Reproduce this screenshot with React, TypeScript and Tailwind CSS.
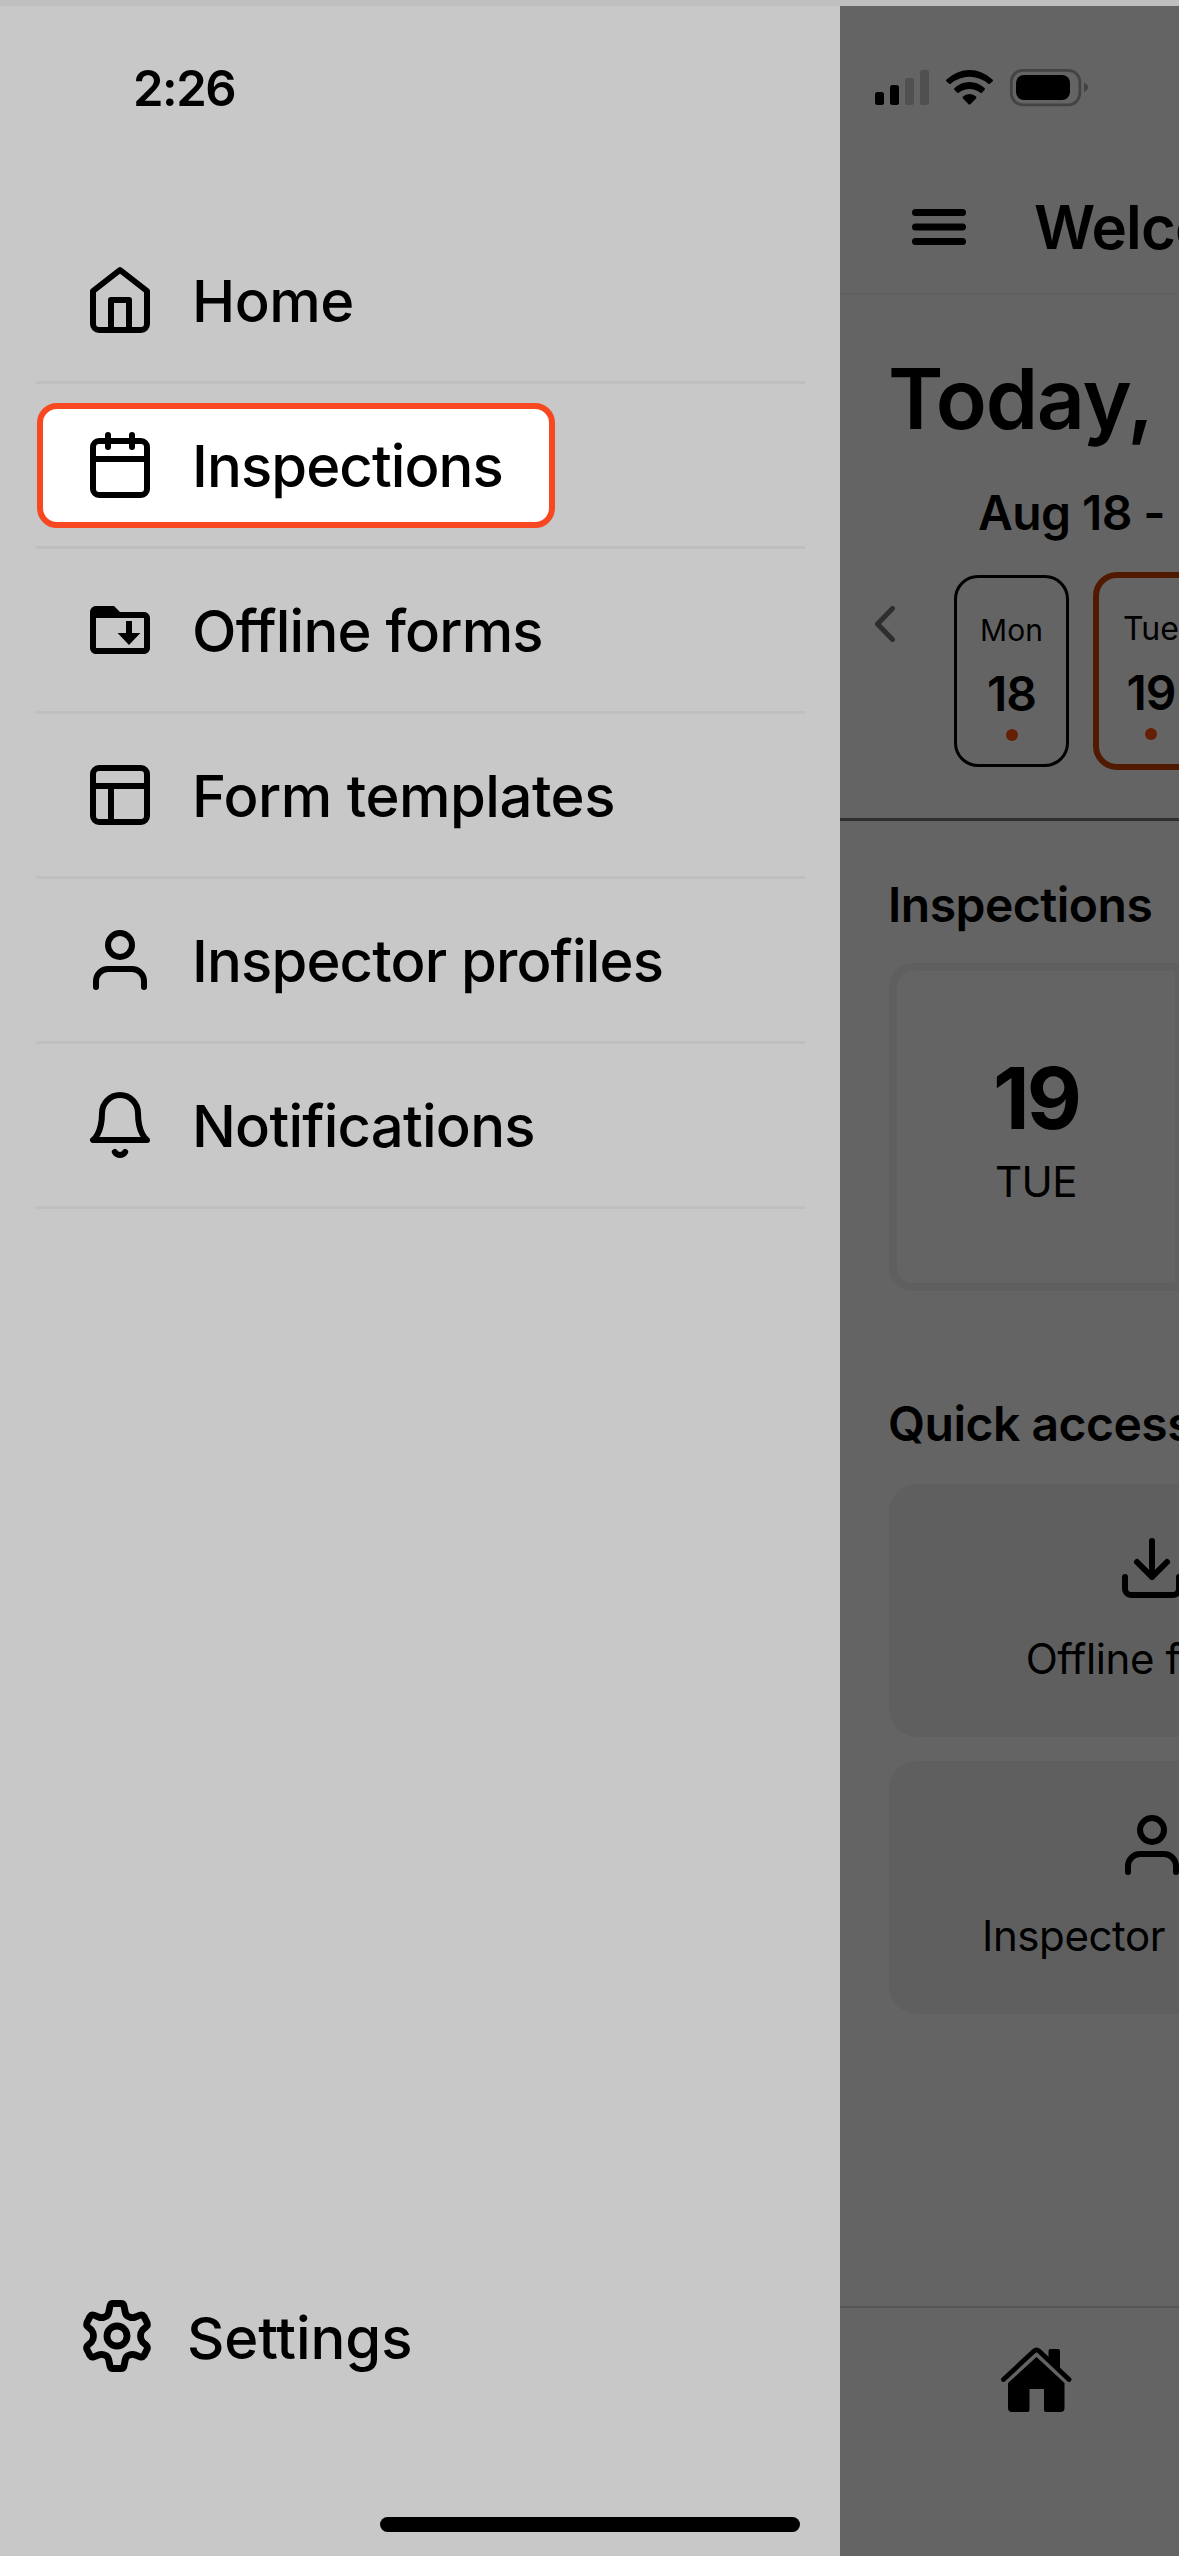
import type { ReactNode } from "react";

type IconProps = { className?: string; children: ReactNode };

function Icon({ className = "size-[72px]", children }: IconProps) {
  return (
    <svg
      viewBox="0 0 24 24"
      fill="none"
      stroke="currentColor"
      strokeWidth={2}
      strokeLinecap="round"
      strokeLinejoin="round"
      className={`shrink-0 ${className}`}
    >
      {children}
    </svg>
  );
}

const HomeIcon = () => (
  <Icon>
    <path d="m3 9 9-7 9 7v11a2 2 0 0 1-2 2H5a2 2 0 0 1-2-2z" />
    <path d="M9 22V12h6v10" />
  </Icon>
);

const CalendarIcon = () => (
  <Icon>
    <rect x="3" y="4" width="18" height="18" rx="2" />
    <path d="M8 2v4M16 2v4M3 10h18" />
  </Icon>
);

const FolderIcon = () => (
  <Icon>
    <g fill="currentColor" stroke="none">
      <path d="M20 6h-8l-2-2H4c-1.1 0-1.99.9-1.99 2L2 18c0 1.1.9 2 2 2h16c1.1 0 2-.9 2-2V8c0-1.1-.9-2-2-2zm0 12H4V8h16v10z" />
      <path d="M16 9h-2v4h-2.8l3.8 4 3.8-4H16z" />
    </g>
  </Icon>
);

const TemplateIcon = () => (
  <Icon>
    <rect x="3" y="3" width="18" height="18" rx="2" />
    <path d="M3 9h18M9 21V9" />
  </Icon>
);

const UserIcon = () => (
  <Icon>
    <path d="M20 21v-2a4 4 0 0 0-4-4H8a4 4 0 0 0-4 4v2" />
    <circle cx="12" cy="7" r="4" />
  </Icon>
);

const BellIcon = () => (
  <Icon>
    <path d="M18 8A6 6 0 0 0 6 8c0 7-3 9-3 9h18s-3-2-3-9" />
    <path d="M13.73 21a2 2 0 0 1-3.46 0" />
  </Icon>
);

const DownloadIcon = () => (
  <Icon>
    <path d="M21 15v4a2 2 0 0 1-2 2H5a2 2 0 0 1-2-2v-4" />
    <path d="m7 10 5 5 5-5M12 15V3" />
  </Icon>
);

const GearIcon = () => (
  <svg
    viewBox="-36 -36 72 72"
    fill="none"
    stroke="currentColor"
    strokeWidth={6.8}
    strokeLinejoin="round"
    className="size-[72px] shrink-0"
  >
    <circle r="10" />
    <path d="M-4-32.5H4Q6.500-32.500 7-30L8.300-23.500Q9-20 12.500-19Q15.500-17.800 18.500-19L23-20.800Q25.500-21.800 27-19.500L30-13.500Q31-11 29.300-9.300L25.500-6Q23.500-3.500 23.500 0Q23.500 3.500 25.500 6L29.300 9.300Q31 11 30 13.500L27 19.500Q25.500 21.800 23 20.800L18.500 19Q15.500 17.800 12.500 19Q9 20 8.300 23.500L7 30Q6.500 32.500 4 32.500H-4Q-6.500 32.500-7 30L-8.300 23.500Q-9 20-12.500 19Q-15.500 17.800-18.500 19L-23 20.800Q-25.500 21.800-27 19.500L-30 13.500Q-31 11-29.300 9.300L-25.500 6Q-23.500 3.500-23.500 0Q-23.500-3.500-25.500-6L-29.300-9.300Q-31-11-30-13.500L-27-19.500Q-25.500-21.800-23-20.800L-18.500-19Q-15.500-17.800-12.500-19Q-9-20-8.300-23.500L-7-30Q-6.500-32.500-4-32.500Z" />
  </svg>
);

const menu = [
  { label: "Home", icon: <HomeIcon />, tracking: "tracking-[-0.5px]" },
  { label: "Inspections", icon: <CalendarIcon />, tracking: "tracking-[-0.9px]", active: true },
  { label: "Offline forms", icon: <FolderIcon />, tracking: "tracking-[-0.8px]" },
  { label: "Form templates", icon: <TemplateIcon />, tracking: "tracking-[-0.5px]" },
  { label: "Inspector profiles", icon: <UserIcon />, tracking: "tracking-[-0.85px]" },
  { label: "Notifications", icon: <BellIcon />, tracking: "tracking-[-0.75px]" },
];

function Drawer() {
  return (
    <aside className="flex w-[840px] shrink-0 flex-col bg-[#c8c8c8]">
      <div className="flex h-[213px] items-start pl-[133px] pt-[53px]">
        <span className="text-[49px] font-semibold leading-[60px] tracking-[-1.5px]">2:26</span>
      </div>

      {/* Menu */}
      <nav className="flex w-[805px] flex-col pl-9">
        {menu.map((item) => (
          <div key={item.label} className="flex h-[165px] items-center border-b-[3px] border-[#bfbfbf]">
            <div
              className={`flex h-[125px] items-center gap-9 ${
                item.active
                  ? "ml-px w-[518px] rounded-[20px] border-[6px] border-[#f84822] bg-white pl-[41px]"
                  : "pl-12"
              }`}
            >
              {item.icon}
              <span className={`whitespace-nowrap pt-px text-[58px] font-medium leading-[70px] ${item.tracking}`}>
                {item.label}
              </span>
            </div>
          </div>
        ))}
      </nav>

      {/* Settings */}
      <div className="mt-auto flex items-center gap-[34px] pl-[81px]">
        <GearIcon />
        <span className="pt-1 text-[58px] font-medium leading-[70px] tracking-[-0.1px]">Settings</span>
      </div>
      <div className="mb-6 ml-[380px] mt-[144px] h-[15px] w-[420px] rounded-full bg-black" />
    </aside>
  );
}

function StatusIcons() {
  return (
    <svg viewBox="0 0 220 40" className="ml-[33px] h-10 w-[220px] shrink-0">
      <rect x="2" y="24" width="9" height="13" rx="2.5" />
      <rect x="17" y="17" width="9" height="20" rx="2.5" />
      <rect x="32" y="10" width="9" height="27" rx="2.5" fill="#505050" />
      <rect x="47" y="2" width="9" height="35" rx="2.5" fill="#505050" />
      <path d="M73.500 11.500Q84 2 96.500 2T119.500 11.500Q120.500 12.500 119.500 13.500L117 15.500Q116 16.500 115 15.500Q106.500 8.800 96.500 8.800T78 15.500Q77 16.500 76 15.500L73.500 13.500Q72.500 12.500 73.500 11.500Z" />
      <path d="M81.500 20Q88 14 96.500 14T111.500 20Q112.500 21 111.500 22L109 24.500Q108 25.500 107 24.500Q102.500 21 96.500 21T86 24.500Q85 25.500 84 24.500L81.500 22Q80.500 21 81.500 20Z" />
      <path d="M90 28.500Q92.500 26 96.500 26T103 28.500Q104 29.500 103 30.500L97.500 36.200Q96.500 37 95.500 36.200L90 30.500Q89 29.500 90 28.500Z" />
      <rect x="138.3" y="2.3" width="68.5" height="34.5" rx="11.5" fill="none" stroke="#434343" strokeWidth="2.8" />
      <rect x="143" y="7" width="54" height="25" rx="8" />
      <path d="M211 14.500q4 2 4 4.800t-4 4.800z" fill="#434343" />
    </svg>
  );
}

type DayProps = { name: string; date: string; selected?: boolean };

function Day({ name, date, selected }: DayProps) {
  return (
    <div
      className={`flex shrink-0 flex-col items-center rounded-[24px] ${
        selected
          ? "h-[198px] w-[116px] border-[6px] border-[#511a00] pt-[31px]"
          : "h-[192px] w-[115px] border-[3px] border-black pt-[32px]"
      }`}
    >
      <span className={selected ? "text-[32px] leading-[40px]" : "text-[30px] leading-[40px]"}>{name}</span>
      <span className="mt-4 text-[48px] font-semibold leading-[56px] tracking-[-1px]">{date}</span>
      <span className="mt-[7px] size-3 rounded-full bg-[#641f05]" />
    </div>
  );
}

function QuickCard({ label, children }: { label: string; children: ReactNode }) {
  return (
    <div className="flex h-[253px] w-[526px] flex-col items-center rounded-[28px] bg-[#5f5f5f] pt-12">
      {children}
      <span className="mt-[29px] text-[42px] leading-[52px] tracking-[-0.4px]">{label}</span>
    </div>
  );
}

function HomeScreen() {
  return (
    <main className="flex w-[339px] shrink-0 flex-col overflow-hidden whitespace-nowrap bg-[#646464]">
      <div className="flex h-[289px] shrink-0 flex-col border-b-2 border-[#616161] pt-[62px]">
        <StatusIcons />
        {/* Header */}
        <div className="flex items-center gap-[68px] pl-[72px] pt-[83px]">
          <svg
            viewBox="0 0 54 36"
            className="h-9 w-[54px] shrink-0"
            stroke="currentColor"
            strokeWidth="7"
            strokeLinecap="round"
          >
            <path d="M3.500 3.500h47M3.500 18h47M3.500 32.500h47" />
          </svg>
          <h1 className="text-[60px] font-semibold leading-[72px] tracking-[-0.8px]">Welcome</h1>
        </div>
      </div>

      {/* Week */}
      <section className="flex h-[526px] shrink-0 flex-col border-b-[3px] border-[#2f2f2f]">
        <h2 className="pl-[48px] pt-[54px] text-[84px] font-semibold leading-[100px] tracking-[-1.2px]">Today,</h2>
        <p className="pl-[138px] pt-[34px] text-[48px] font-semibold leading-[60px] tracking-[-0.6px]">Aug 18 -</p>
        <div className="mt-[29px] flex items-start">
          <svg
            viewBox="0 0 20 36"
            className="ml-[35px] mr-[59px] mt-[34px] h-9 w-5 shrink-0"
            fill="none"
            stroke="#2d2d2d"
            strokeWidth="5"
            strokeLinecap="round"
            strokeLinejoin="round"
          >
            <path d="M17.500 2.500 2.500 18l15 15.500" />
          </svg>
          <div className="flex items-center gap-6">
            <Day name="Mon" date="18" />
            <Day name="Tue" date="19" selected />
          </div>
        </div>
      </section>

      {/* Inspections */}
      <section className="flex shrink-0 flex-col pl-[49px] pt-[54px]">
        <h3 className="-ml-px text-[48px] font-semibold leading-[60px] tracking-[-0.5px]">Inspections</h3>
        <div className="mt-[28px] flex h-[328px] w-[600px] rounded-[24px] border-8 border-[#5f5f5f]">
          <div className="flex w-[286px] flex-col items-center border-r-8 border-[#5f5f5f] pt-[78px]">
            <span className="text-[85px] font-bold leading-[100px] tracking-[-3px]">19</span>
            <span className="mt-[5px] text-[42px] leading-[56px] tracking-[-0.5px]">TUE</span>
          </div>
        </div>
      </section>

      {/* Quick access */}
      <section className="flex shrink-0 flex-col pl-[49px] pt-[103px]">
        <h3 className="-ml-px text-[48px] font-semibold leading-[60px] tracking-[-0.5px]">Quick access</h3>
        <div className="mt-[30px] flex flex-col gap-6">
          <QuickCard label="Offline forms">
            <DownloadIcon />
          </QuickCard>
          <QuickCard label="Inspector profiles">
            <UserIcon />
          </QuickCard>
        </div>
      </section>

      {/* Tab bar */}
      <footer className="mt-auto h-[250px] shrink-0 border-t-2 border-[#565656] pl-[160px] pt-[37px]">
        <svg viewBox="0 0 72 68" className="h-[68px] w-[72px]">
          <path
            d="M3.500 34.500 34 6q2.500-2.200 5 0L69 34.500"
            fill="none"
            stroke="currentColor"
            strokeWidth="4.8"
            strokeLinecap="round"
          />
          <path d="M48.500 6q0-2 2-2H58q2 0 2 2v20L48.500 15z" />
          <path d="M36.500 12 64.500 38v25q0 4-4 4H46q-2 0-2-2V44H29.500v21q0 2-2 2H12q-4 0-4-4V38z" />
        </svg>
      </footer>
    </main>
  );
}

export default function App() {
  return (
    <div className="flex h-[2556px] w-[1179px] flex-col overflow-hidden bg-[#bfbfbf] pt-1.5 font-['Inter','Liberation_Sans',sans-serif] text-black">
      <div className="flex flex-1">
        <Drawer />
        <HomeScreen />
      </div>
    </div>
  );
}
